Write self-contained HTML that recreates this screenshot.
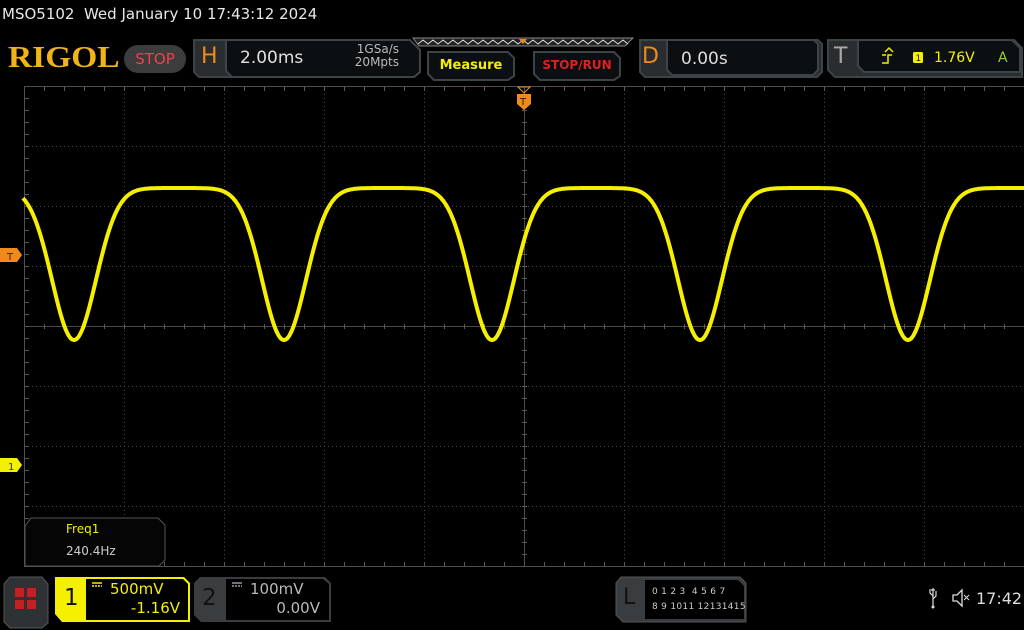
<!DOCTYPE html>
<html><head><meta charset="utf-8"><style>
*{margin:0;padding:0;box-sizing:border-box}
body{width:1024px;height:630px;background:#000;overflow:hidden;position:relative;font-family:"DejaVu Sans","Liberation Sans",sans-serif;color:#ddd}
.a{position:absolute;white-space:nowrap}
</style></head><body>
<div class="a" style="left:2px;top:5px;font-size:15px;color:#e8e8e8">MSO5102&nbsp; Wed January 10 17:43:12 2024</div>
<div class="a" style="left:8px;top:39px;font-family:'Liberation Serif',serif;font-weight:bold;font-size:31px;color:#f0b418;transform:scaleX(1.08);transform-origin:left">RIGOL</div>
<div class="a" style="left:124px;top:45px;width:62px;height:28px;border-radius:14px;background:#3c3c3c;color:#f04050;font-size:15px;text-align:center;line-height:28px">STOP</div>
<svg class="a" style="left:0;top:0" width="1024" height="630">
 <g stroke="#3c4448" stroke-width="2" fill="#0b0f12">
  <path d="M194 40 H410 L420 50 V72 L414 77 H199 L194 72Z" fill="#2a2d30"/>
  <path d="M226 40 H410 L420 50 V72 L414 77 H232 L226 71Z"/>
  <path d="M428 52 H508 L514 58 V76 L508 80 H434 L428 74Z"/>
  <path d="M534 52 H614 L620 58 V76 L614 80 H540 L534 74Z"/>
  <path d="M640 40 H818 L822 44 V72 L817 77 H645 L640 72Z" fill="#2a2d30"/>
  <path d="M667 40 H814 L818 44 V70 L813 75 H672 L667 70Z"/>
  <path d="M828 40 H1014 L1022 48 V77 H835 L828 70Z" fill="#2a2d30"/>
  <path d="M858 40 H1012 L1020 48 V72 H864 L858 66Z"/>
 </g>
 <path d="M413 38 H633 L625 46 H419Z" fill="#222" stroke="#888"/>
 <path d="M418 44 l5 -4 l5 4 l5 -4 l5 4 l5 -4 l5 4 l5 -4 l5 4 l5 -4 l5 4 l5 -4 l5 4 l5 -4 l5 4 l5 -4 l5 4 l5 -4 l5 4 l5 -4 l5 4 l5 -4 l5 4 l5 -4 l5 4 l5 -4 l5 4 l5 -4 l5 4 l5 -4 l5 4 l5 -4 l5 4 l5 -4 l5 4 l5 -4 l5 4 l5 -4 l5 4 l5 -4 l5 4 l5 -4 l5 4" stroke="#ddd" fill="none" stroke-width="1"/>
 <path d="M519 39 h8 l-4 5z" fill="#f08a1a"/>
 <g id="grid" stroke="#4a4a4a" stroke-width="1" stroke-dasharray="1 3"></g>
 <rect x="24.5" y="86.5" width="1000" height="480" fill="none" stroke="#505050"/>
 <line x1="24" y1="326.5" x2="1024" y2="326.5" stroke="#4a4a4a"/>
 <line x1="524.5" y1="86" x2="524.5" y2="566" stroke="#4a4a4a"/>
 <g id="ticks" stroke="#5a5a5a"></g>
 <path id="wave" fill="none" stroke="#f5f000" stroke-width="4" stroke-linejoin="round"/>
 <path d="M0 248 H17 L22 255 L17 262 H0Z" fill="#f08a1a"/>
 <text x="7" y="260" font-size="10" fill="#402000" font-family="DejaVu Sans">T</text>
 <path d="M0 458 H17 L22 465 L17 472 H0Z" fill="#f5ef00"/>
 <text x="8" y="470" font-size="10" fill="#333" font-family="DejaVu Sans">1</text>
 <path d="M518 87 h12 l-6 6z" fill="none" stroke="#f08a1a"/>
 <path d="M517 94 H531 V104 L524 110 L517 104Z" fill="#f08a1a"/>
 <text x="520" y="105" font-size="10" fill="#222" font-family="DejaVu Sans">T</text>
 <path d="M25 526 L31 518 H158 L165 525 V560 L159 566 H25Z" fill="#050505" stroke="#555"/>
 <path d="M4 584 L10 577 H42 L48 584 V623 L42 628 H10 L4 622Z" fill="#2f3235" stroke="#555"/>
 <g fill="#c42020"><rect x="15" y="588" width="9" height="9"/><rect x="27" y="588" width="9" height="9"/><rect x="15" y="600" width="9" height="9"/><rect x="27" y="600" width="9" height="9"/></g>
 <path d="M55 577 H184 L190 583 V622 H62 L55 614Z" fill="#f5ef00"/>
 <path d="M86 579 H183 L188 584 V620 H86Z" fill="#000"/>
 <path d="M194 583 L200 577 H325 L331 583 V622 H201 L194 615Z" fill="#3a3d40"/>
 <path d="M226 579 H323 L329 584 V620 H226Z" fill="#000"/>
 <path d="M616 583 L621 577 H740 L746 583 V622 H623 L616 615Z" fill="#3a3d40" stroke="#555"/>
 <path d="M645 580 H738 L744 586 V619 H645Z" fill="#000"/>
 <g stroke="#f5ef00" stroke-width="1.5"><line x1="92" y1="583" x2="102" y2="583"/><line x1="92" y1="586" x2="102" y2="586" stroke-dasharray="2 1"/></g>
 <g stroke="#999" stroke-width="1.5"><line x1="232" y1="583" x2="242" y2="583"/><line x1="232" y1="586" x2="242" y2="586" stroke-dasharray="2 1"/></g>
 <path d="M882 63 H888 V55 H892 M882 55 H886 M885 52 l4 -4 l4 4" stroke="#f5ef00" fill="none" stroke-width="1.5"/>
 <rect x="913" y="52" width="10" height="11" rx="1.5" fill="#f5ef00"/>
 <text x="915.5" y="61" font-size="9" fill="#222" font-family="DejaVu Sans">1</text>
 <path d="M933 588 V606 M933 596 l-3 -3 V589 M933 599 l3 -3 V591 M931 590 h4" stroke="#ddd" fill="none" stroke-width="1.2"/>
 <circle cx="933" cy="607" r="1.5" fill="#ddd"/>
 <path d="M953 595 h4 l5 -5 v16 l-5 -5 h-4z" fill="none" stroke="#ddd" stroke-width="1.3"/>
 <path d="M964 595 l5 5 M969 595 l-5 5" stroke="#ddd"/>
</svg>
<div class="a" style="left:201px;top:44px;font-size:22px;color:#f08a1a">H</div>
<div class="a" style="left:240px;top:48px;font-size:17px;color:#e0e0e0">2.00ms</div>
<div class="a" style="left:343px;top:43px;font-size:12px;color:#bbb;line-height:13px;text-align:right;width:56px">1GSa/s<br>20Mpts</div>
<div class="a" style="left:428px;top:58px;width:86px;text-align:center;font-size:13px;font-weight:bold;color:#f5ef00">Measure</div>
<div class="a" style="left:534px;top:58px;width:86px;text-align:center;font-size:12px;font-weight:bold;color:#e02020">STOP/RUN</div>
<div class="a" style="left:642px;top:44px;font-size:22px;color:#f08a1a">D</div>
<div class="a" style="left:681px;top:49px;font-size:17px;color:#ddd">0.00s</div>
<div class="a" style="left:834px;top:44px;font-size:22px;color:#aaa">T</div>
<div class="a" style="left:934px;top:50px;font-size:14px;color:#f5ef00">1.76V</div>
<div class="a" style="left:998px;top:50px;font-size:14px;color:#9acd32">A</div>
<div class="a" style="left:66px;top:522px;font-size:12px;color:#f5ef00">Freq1</div>
<div class="a" style="left:66px;top:544px;font-size:12px;color:#ccc">240.4Hz</div>
<div class="a" style="left:64px;top:585px;font-size:23px;color:#111">1</div>
<div class="a" style="left:110px;top:580px;font-size:15px;color:#f5ef00">500mV</div>
<div class="a" style="left:120px;top:599px;width:60px;text-align:right;font-size:15px;color:#f5ef00">-1.16V</div>
<div class="a" style="left:202px;top:585px;font-size:23px;color:#111">2</div>
<div class="a" style="left:250px;top:580px;font-size:15px;color:#bbb">100mV</div>
<div class="a" style="left:260px;top:599px;width:60px;text-align:right;font-size:15px;color:#bbb">0.00V</div>
<div class="a" style="left:623px;top:585px;font-size:22px;color:#111">L</div>
<div class="a" style="left:652px;top:585px;font-size:9px;color:#ccc;line-height:15px;letter-spacing:0.3px">0 1 2 3 &nbsp;4 5 6 7<br>8 9 1011 12131415</div>
<div class="a" style="left:976px;top:589px;font-size:16px;color:#ddd">17:42</div>
<script>
var ns="http://www.w3.org/2000/svg",g=document.getElementById("grid"),t=document.getElementById("ticks");
function L(p,a,b,c,d){var l=document.createElementNS(ns,"line");l.setAttribute("x1",a);l.setAttribute("y1",b);l.setAttribute("x2",c);l.setAttribute("y2",d);p.appendChild(l);}
for(var x=124.5;x<1024;x+=100)L(g,x,86,x,566);
for(var y=146.5;y<566;y+=60)L(g,24,y,1024,y);
for(var x=44;x<1024;x+=20){L(t,x+.5,87,x+.5,91);L(t,x+.5,562,x+.5,566);L(t,x+.5,324,x+.5,329);}
for(var y=98;y<566;y+=12){L(t,25,y+.5,29,y+.5);L(t,522,y+.5,527,y+.5);}
var mins=[74,284,492,700,908,1116,-134],d="";
for(var x=23;x<=1024;x+=1){var m=1e9;for(var i=0;i<mins.length;i++)m=Math.min(m,Math.abs(x-mins[i]));
var f=1-Math.exp(-Math.pow(m/31,2));var y=340-152*f;d+=(x==23?"M":"L")+x+" "+y.toFixed(1);}
document.getElementById("wave").setAttribute("d",d);
</script>
</body></html>
